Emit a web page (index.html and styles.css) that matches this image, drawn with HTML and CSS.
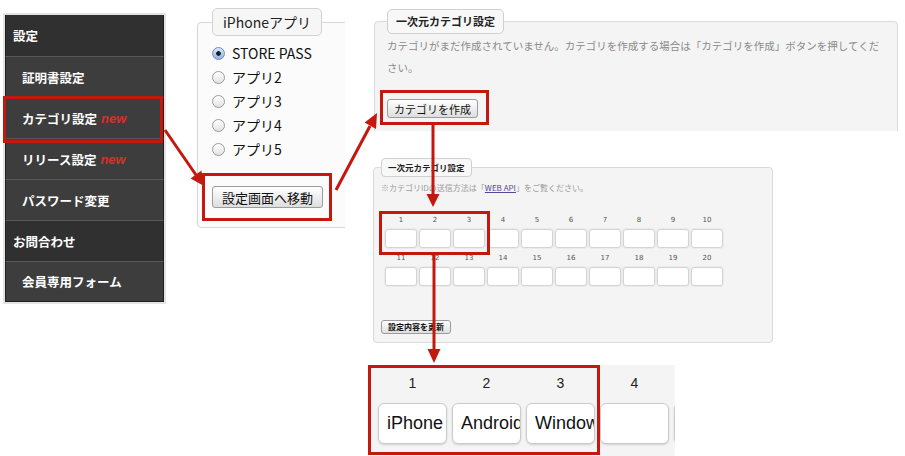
FILE: index.html
```html
<!DOCTYPE html>
<html lang="ja">
<head>
  <meta charset="UTF-8">
  <meta name="viewport" content="width=device-width, initial-scale=1.0">
  <title>カテゴリ設定の手順</title>
  <link rel="stylesheet" href="styles.css">
</head>
<body>
  <div class="canvas">

    <!-- Sidebar menu -->
    <nav class="sidebar">
      <div class="menu-head">設定</div>
      <div class="menu-item">証明書設定</div>
      <div class="menu-item">カテゴリ設定 <em>new</em></div>
      <div class="menu-item">リリース設定 <em>new</em></div>
      <div class="menu-item">パスワード変更</div>
      <div class="menu-head">お問合わせ</div>
      <div class="menu-item">会員専用フォーム</div>
    </nav>

    <!-- App select -->
    <div class="shot app-shot">
      <fieldset class="app-select">
        <legend>iPhoneアプリ</legend>
        <label class="radio-row"><input type="radio" name="app" checked>STORE PASS</label>
        <label class="radio-row"><input type="radio" name="app">アプリ2</label>
        <label class="radio-row"><input type="radio" name="app">アプリ3</label>
        <label class="radio-row"><input type="radio" name="app">アプリ4</label>
        <label class="radio-row"><input type="radio" name="app">アプリ5</label>
        <button type="button" class="btn app-btn">設定画面へ移動</button>
      </fieldset>
    </div>

    <!-- Empty category state -->
    <div class="shot cat-shot">
      <fieldset class="cat-empty">
        <legend>一次元カテゴリ設定</legend>
        <p class="cat-desc">カテゴリがまだ作成されていません。カテゴリを作成する場合は「カテゴリを作成」ボタンを押してください。</p>
        <button type="button" class="btn cat-btn">カテゴリを作成</button>
      </fieldset>
    </div>

    <!-- Category inputs (small) -->
    <div class="shot grid-shot">
      <fieldset class="cat-grid">
        <legend>一次元カテゴリ設定</legend>
        <p class="cat-note">※カテゴリIDの送信方法は「<a href="#">WEB API</a>」をご覧ください。</p>
        <div class="cells" id="cells"></div>
        <button type="button" class="btn grid-btn">設定内容を更新</button>
      </fieldset>
    </div>

    <!-- Category inputs (zoomed) -->
    <div class="shot zoom-shot">
      <div class="zoom-cells">
        <div class="zoom-cell"><span>1</span><input type="text" value="iPhone"></div>
        <div class="zoom-cell"><span>2</span><input type="text" value="Android"></div>
        <div class="zoom-cell"><span>3</span><input type="text" value="Windows"></div>
        <div class="zoom-cell"><span>4</span><input type="text" value=""></div>
        <div class="zoom-cell"><span></span><input type="text" value=""></div>
      </div>
    </div>

    <!-- Annotation boxes -->
    <div class="mark mark-menu"></div>
    <div class="mark mark-appbtn"></div>
    <div class="mark mark-catbtn"></div>
    <div class="mark mark-cells"></div>
    <div class="mark mark-zoom"></div>

    <!-- Annotation arrows -->
    <svg class="arrows" width="905" height="456" viewBox="0 0 905 456">
      <g stroke="#c4180f" stroke-width="3" fill="none">
        <line x1="165" y1="130" x2="196" y2="175"/>
        <line x1="336" y1="190" x2="370" y2="126"/>
        <line x1="433" y1="125" x2="433" y2="196"/>
        <line x1="434" y1="255" x2="434" y2="350"/>
      </g>
      <g fill="#c4180f">
        <polygon points="204,186 190.6,178.4 201.4,170.6"/>
        <polygon points="377,113 376,129 364.6,122.6"/>
        <polygon points="433,207 426.5,194 439.5,194"/>
        <polygon points="434,363 427.5,349 440.5,349"/>
      </g>
    </svg>
  </div>

  <script>
    const cells = document.getElementById('cells');
    for (let i = 1; i <= 20; i++) {
      const cell = document.createElement('div');
      cell.className = 'cell';
      cell.innerHTML = `<span>${i}</span><input type="text">`;
      cells.appendChild(cell);
    }
  </script>
</body>
</html>
```

FILE: styles.css
```css
/* General Styles */
* {
  margin: 0;
  padding: 0;
  box-sizing: border-box;
}

body {
  font-family: "Noto Sans CJK JP", sans-serif;
  background: #fff;
  color: #222;
}

.canvas {
  position: relative;
  width: 905px;
  height: 456px;
  overflow: hidden;
}

.shot {
  position: absolute;
  overflow: hidden;
}

fieldset {
  margin: 0;
  min-width: 0;
}

legend {
  white-space: nowrap;
}

.btn {
  font-family: "Noto Sans CJK JP", sans-serif;
  color: #111;
  background: linear-gradient(#ffffff, #dedede);
  border: 1px solid #9c9c9c;
  border-radius: 3px;
  cursor: pointer;
  display: block;
}

/* Sidebar */
.sidebar {
  position: absolute;
  left: 3px;
  top: 13px;
  width: 163px;
  border: 2px solid #e3e3e3;
}

.menu-head,
.menu-item {
  height: 41px;
  display: flex;
  align-items: center;
  border-top: 1px solid #585858;
  border-left: 1px solid #1f1f1f;
  border-right: 1px solid #1f1f1f;
  color: #fff;
  font-size: 12.5px;
  font-weight: bold;
  white-space: nowrap;
}

.menu-head {
  background: #303030;
  padding-left: 7px;
}

.menu-head:first-child {
  border-top: none;
}

.menu-item {
  background: #3d3d3d;
  padding-left: 16px;
}

.menu-item:last-child {
  border-bottom: 1px solid #1f1f1f;
}

.menu-item em {
  font-family: "Liberation Sans", sans-serif;
  font-size: 13px;
  font-weight: bold;
  color: #d8302a;
  margin-left: 4px;
}

/* App select */
.app-shot {
  left: 197px;
  top: 8px;
  width: 148px;
  height: 222px;
}

.app-select {
  width: 170px;
  height: 220px;
  padding: 5px 0 0 14px;
  background: #fbfbfb;
  border: 1px solid #d6d6d6;
  border-radius: 4px;
}

.app-select legend {
  height: 28px;
  line-height: 26px;
  padding: 0 10px;
  font-size: 14px;
  background: #f6f6f6;
  border: 1px solid #d2d2d2;
  border-radius: 5px;
}

.radio-row {
  display: flex;
  align-items: center;
  height: 24px;
  font-size: 14px;
  color: #111;
}

.radio-row input {
  appearance: none;
  width: 13px;
  height: 13px;
  margin-right: 7px;
  border-radius: 50%;
  border: 1px solid #9a9a9a;
  background: linear-gradient(#ffffff, #e2e2e2);
}

.radio-row input:checked {
  border-color: #6f8cb6;
  background: radial-gradient(circle, #1e1e1e 0 2px, transparent 2.6px),
    linear-gradient(#d9e8fa, #8db5e6);
}

.app-btn {
  margin-top: 25px;
  height: 22px;
  padding: 0 9px;
  font-size: 13px;
}

/* Empty category state */
.cat-shot {
  left: 374px;
  top: 9px;
  width: 524px;
  height: 122px;
}

.cat-empty {
  width: 524px;
  height: 150px;
  padding: 1px 13px 0 12px;
  background: #f4f4f4;
  border: 1px solid #dadada;
  border-radius: 4px;
}

.cat-empty legend {
  height: 25px;
  line-height: 23px;
  padding: 0 8px;
  font-size: 11px;
  font-weight: bold;
  color: #222;
  background: #f8f8f8;
  border: 1px solid #d0d0d0;
  border-radius: 5px;
}

.cat-desc {
  font-size: 10.5px;
  line-height: 22px;
  color: #8a8a8a;
}

.cat-btn {
  margin-top: 20px;
  height: 19px;
  padding: 0 6px;
  font-size: 11px;
}

/* Category inputs (small) */
.grid-shot {
  left: 373px;
  top: 158px;
  width: 400px;
  height: 186px;
}

.cat-grid {
  width: 400px;
  height: 185px;
  padding: 4px 0 0 7px;
  background: #f4f4f4;
  border: 1px solid #dadada;
  border-radius: 4px;
}

.cat-grid legend {
  height: 19px;
  line-height: 17px;
  padding: 0 6px;
  font-size: 8.5px;
  font-weight: bold;
  color: #222;
  background: #f8f8f8;
  border: 1px solid #d0d0d0;
  border-radius: 4px;
}

.cat-note {
  font-size: 8px;
  line-height: 14px;
  color: #9a9a9a;
  white-space: nowrap;
}

.cat-note a {
  color: #55469a;
}

.cells {
  display: grid;
  grid-template-columns: repeat(10, 32px);
  column-gap: 2px;
  row-gap: 3px;
  margin: 18px 0 0 4px;
}

.cell span {
  display: block;
  height: 14px;
  margin-bottom: 2px;
  font-family: "DejaVu Sans", sans-serif;
  font-size: 7px;
  line-height: 14px;
  text-align: center;
  color: #555;
}

.cell input {
  display: block;
  width: 32px;
  height: 19px;
  background: #fff;
  border: 1px solid #d4d4d4;
  border-radius: 3px;
  box-shadow: 0 0 0 1px #ebebeb;
}

.grid-btn {
  margin-top: 34px;
  height: 14px;
  padding: 0 6px;
  font-size: 8px;
  font-weight: bold;
  line-height: 12px;
}

/* Category inputs (zoomed) */
.zoom-shot {
  left: 368px;
  top: 365px;
  width: 307px;
  height: 91px;
  background: #f4f4f4;
}

.zoom-cells {
  display: flex;
  gap: 5px;
  padding: 8px 0 0 10px;
}

.zoom-cell span {
  display: block;
  height: 20px;
  margin-bottom: 10px;
  font-family: "Liberation Sans", sans-serif;
  font-size: 14px;
  line-height: 20px;
  text-align: center;
  color: #222;
}

.zoom-cell input {
  display: block;
  width: 69px;
  height: 41px;
  padding: 0 0 0 8px;
  font-family: "Liberation Sans", sans-serif;
  font-size: 18px;
  color: #111;
  background: #fff;
  border: 1px solid #cbcbcb;
  border-radius: 6px;
  box-shadow: 0 1px 2px rgba(0, 0, 0, 0.15);
}

/* Annotations */
.mark {
  position: absolute;
  border: 3px solid #c4180f;
}

.mark-menu {
  left: 3px;
  top: 96px;
  width: 160px;
  height: 47px;
}

.mark-appbtn {
  left: 202px;
  top: 173px;
  width: 130px;
  height: 48px;
}

.mark-catbtn {
  left: 380px;
  top: 90px;
  width: 109px;
  height: 35px;
}

.mark-cells {
  left: 379px;
  top: 211px;
  width: 111px;
  height: 44px;
}

.mark-zoom {
  left: 368px;
  top: 365px;
  width: 232px;
  height: 90px;
}

.arrows {
  position: absolute;
  left: 0;
  top: 0;
  pointer-events: none;
}
```
